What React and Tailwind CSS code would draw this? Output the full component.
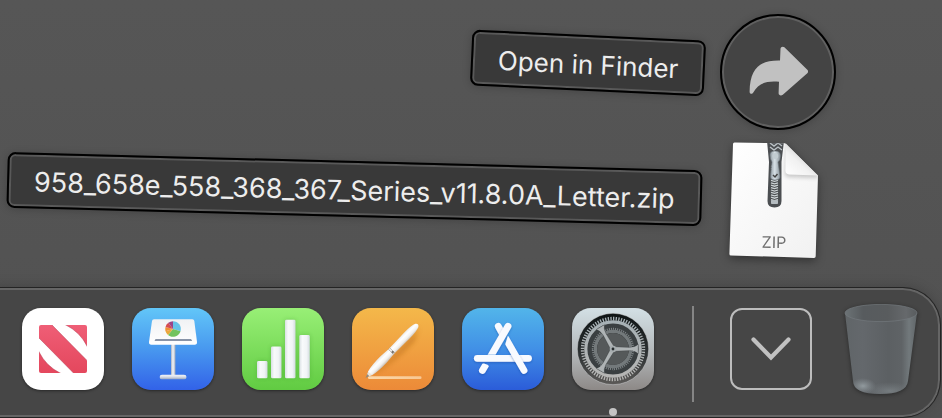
import React from "react";

const TILE = "block h-[82px] w-[82px] shrink-0 overflow-hidden rounded-[19px] shadow-[0_1px_3px_rgba(0,0,0,0.45)]";
const LABEL =
  "flex h-14 items-center rounded-lg border-2 border-black bg-[#393939] px-[25px] pt-[3px] leading-8 whitespace-nowrap text-[#ededed] shadow-[inset_0_0_0_2px_#595959,0_1px_8px_rgba(0,0,0,0.2)]";

function ShareArrow() {
  return (
    <svg viewBox="0 0 60 52" className="h-[52px] w-[60px]" aria-hidden="true">
      <path
        d="M32.5 2.7C32.6.7 35 0 36.4 1.3L59.3 23.7C60.3 24.7 60.3 26.2 59.3 27.2L34.8 48.7C33.3 50 30.6 49.5 30.6 47.3L31 35.7C18 34.7 10.5 37 5.3 46.5C4.2 48.5 1.6 48.1 1.6 45.7C2 22.5 11.5 14 32 14.5Z"
        fill="#c1c1c1"
      />
    </svg>
  );
}

function ZipFile() {
  const teeth = Array.from({ length: 15 }, (_, i) => 28 + i * 2.4);
  return (
    <svg viewBox="0 0 116 124" className="h-[124px] w-[116px] shrink-0 overflow-visible drop-shadow-[0_3px_5px_rgba(0,0,0,0.4)]" aria-hidden="true">
      <defs>
        <linearGradient id="zipPage" x1="0" y1="0" x2="1" y2="1">
          <stop offset="0" stopColor="#fff" />
          <stop offset="1" stopColor="#f1f1f1" />
        </linearGradient>
        <linearGradient id="zipFold" x1="0" y1="1" x2="0.55" y2="0.4">
          <stop offset="0" stopColor="#fff" />
          <stop offset="0.7" stopColor="#f1f1f1" />
          <stop offset="1" stopColor="#dadada" />
        </linearGradient>
        <linearGradient id="zipPull" x1="0" x2="1">
          <stop offset="0" stopColor="#8d979e" />
          <stop offset="0.45" stopColor="#d6dfe5" />
          <stop offset="1" stopColor="#879198" />
        </linearGradient>
        <filter id="zipSoft" x="-20%" y="-20%" width="140%" height="150%">
          <feGaussianBlur stdDeviation="2" />
        </filter>
        <clipPath id="zipClip">
          <path d="M14.5 4.5L65 5.2L98 37.5L95.7 118.2Q95.7 120 94 120L11 117.4Q9.3 117.4 9.4 115.7L13 6Q13 4.5 14.5 4.5Z" />
        </clipPath>
      </defs>
      <path d="M14.5 4.5L65 5.2L98 37.5L95.7 118.2Q95.7 120 94 120L11 117.4Q9.3 117.4 9.4 115.7L13 6Q13 4.5 14.5 4.5Z" fill="url(#zipPage)" />
      <g clipPath="url(#zipClip)">
        <path d="M66 5L65 36Q65 39 69 39L98 40V36Z" fill="#000" opacity="0.2" filter="url(#zipSoft)" />
        <path d="M47 3H64L61.5 24V63Q61.5 69.5 54.5 69.5Q47.5 69.5 47.5 63L49 24Z" fill="#4b4e51" />
        <path d="M50 5l4 3 4-3 4 3M50 9l4 3 4-3 4 3" stroke="#bbc2c6" strokeWidth="1.4" fill="none" />
        {teeth.map((y) => (
          <path key={y} d={`M51 ${y}l3.5 1l3.5 -1`} stroke="#cbd1d4" strokeWidth="1.3" fill="none" />
        ))}
        <rect x="51" y="62" width="7" height="4" rx="0.8" fill="#b5bcc0" />
        <path d="M50 17Q50 13 55 13Q60.5 13 60.5 18Q60.5 22 58 24L60 38Q60.5 42 55 42Q50 42 50.5 38L52 24Q50 21 50 17Z" fill="url(#zipPull)" stroke="#6d767c" strokeWidth="0.6" />
        <circle cx="55.3" cy="18" r="3" fill="#c1cbd1" />
        <path d="M53 37l2 2 2.5-3" stroke="#444" strokeWidth="1.5" fill="none" />
      </g>
      <path d="M65.6 5.2L97.8 37.5L69 36.4Q65.4 36.2 65.4 32.5Z" fill="url(#zipFold)" />
      <text x="54" y="110" textAnchor="middle" fontSize="16" fill="#6f6f6f" fontFamily="Inter, sans-serif" transform="rotate(1 54 104)">
        ZIP
      </text>
    </svg>
  );
}

function NewsIcon() {
  return (
    <svg viewBox="0 0 82 82" className={TILE} aria-hidden="true">
      <defs>
        <linearGradient id="newsRed" x1="0" y1="17" x2="0" y2="65" gradientUnits="userSpaceOnUse">
          <stop offset="0" stopColor="#ef5e76" />
          <stop offset="1" stopColor="#e4475d" />
        </linearGradient>
        <clipPath id="newsClip">
          <rect x="17" y="17" width="48" height="48" rx="2" />
        </clipPath>
      </defs>
      <rect width="82" height="82" fill="#fff" />
      <g clipPath="url(#newsClip)" fill="url(#newsRed)" stroke="#b53a50" strokeWidth="0.5">
        <path d="M16 16H29L66 53.5V66H52.5L16 29Z" />
        <path d="M43 16.5Q58.5 24 65.5 39V16.5Z" />
        <path d="M16.5 43Q24 58.5 39 65.5H16.5Z" />
      </g>
    </svg>
  );
}

function KeynoteIcon() {
  return (
    <svg viewBox="0 0 82 82" className={TILE} aria-hidden="true">
      <defs>
        <linearGradient id="keyBg" x1="0" y1="0" x2="0" y2="1">
          <stop offset="0" stopColor="#62c6f8" />
          <stop offset="0.5" stopColor="#4898ef" />
          <stop offset="1" stopColor="#3262e8" />
        </linearGradient>
        <linearGradient id="keyStem" x1="0" x2="1">
          <stop offset="0" stopColor="#a9b1bf" />
          <stop offset="0.45" stopColor="#f5f7fa" />
          <stop offset="1" stopColor="#a4acba" />
        </linearGradient>
        <linearGradient id="keyBase" x1="0" y1="0" x2="0" y2="1">
          <stop offset="0" stopColor="#f2f4f8" />
          <stop offset="0.5" stopColor="#d5dbe6" />
          <stop offset="1" stopColor="#9aa6bf" />
        </linearGradient>
        <linearGradient id="keyBoard" x1="0" y1="0" x2="0" y2="1">
          <stop offset="0" stopColor="#f1f2f4" />
          <stop offset="1" stopColor="#fff" />
        </linearGradient>
      </defs>
      <rect width="82" height="82" fill="url(#keyBg)" />
      <rect x="39" y="36" width="4.4" height="32" fill="url(#keyStem)" />
      <path d="M30 66.8H52Q54.5 66.8 54.5 69Q54.5 71.2 52.5 71.2H29.5Q27.7 71.2 27.7 69Q27.7 66.8 30 66.8Z" fill="url(#keyBase)" />
      <path d="M22 11.3H60.4Q62 11.3 62.3 13L65 34Q65.2 36.7 62.7 36.7H19.4Q16.8 36.7 17 34L20 13Q20.3 11.3 22 11.3Z" fill="url(#keyBoard)" />
      <path d="M23.5 31H59L60.2 33H22.5Z" fill="#8994a8" />
      <path d="M41 21V13.2A7.8 7.8 0 0 1 48.5 23.2Z" fill="#66c3e8" />
      <path d="M41 21L48.5 23.2A7.8 7.8 0 0 1 36 27Z" fill="#72c35e" />
      <path d="M41 21L36 27A7.8 7.8 0 0 1 33.5 23.2Z" fill="#eaa83c" />
      <path d="M41 21L33.5 23.2A7.8 7.8 0 0 1 33.5 19Z" fill="#f09034" />
      <path d="M41 21L33.5 19A7.8 7.8 0 0 1 36.3 14.8Z" fill="#d64c51" />
      <path d="M41 21L36.3 14.8A7.8 7.8 0 0 1 41 13.2Z" fill="#9b4588" />
    </svg>
  );
}

function NumbersIcon() {
  const bars = [
    [15, 53],
    [29, 38.5],
    [43, 11.7],
    [57.3, 27],
  ];
  return (
    <svg viewBox="0 0 82 82" className={TILE} aria-hidden="true">
      <defs>
        <linearGradient id="numBg" x1="0" y1="0" x2="0" y2="1">
          <stop offset="0" stopColor="#98ef76" />
          <stop offset="1" stopColor="#61cb42" />
        </linearGradient>
        <linearGradient id="numBar" x1="0" x2="1">
          <stop offset="0" stopColor="#d9e0e3" />
          <stop offset="0.3" stopColor="#f8fafb" />
          <stop offset="0.7" stopColor="#f1f4f6" />
          <stop offset="1" stopColor="#d3dbdf" />
        </linearGradient>
        <filter id="numSoft" x="-50%" y="-20%" width="200%" height="140%">
          <feGaussianBlur stdDeviation="2" />
        </filter>
      </defs>
      <rect width="82" height="82" fill="url(#numBg)" />
      {bars.map(([x, y]) => (
        <g key={x}>
          <rect x={x} y={y} width="10.5" height={70.3 - y} fill="#338b20" opacity="0.3" filter="url(#numSoft)" />
          <rect x={x} y={y} width="10.5" height={70.3 - y} rx="1.4" fill="url(#numBar)" />
        </g>
      ))}
    </svg>
  );
}

function PagesIcon() {
  return (
    <svg viewBox="0 0 82 82" className={TILE} aria-hidden="true">
      <defs>
        <linearGradient id="pagBg" x1="0" y1="0" x2="0" y2="1">
          <stop offset="0" stopColor="#f4b84a" />
          <stop offset="1" stopColor="#ec8a38" />
        </linearGradient>
        <linearGradient id="pagPen" x1="0" y1="0" x2="0" y2="1">
          <stop offset="0" stopColor="#e9e7e4" />
          <stop offset="0.35" stopColor="#fff" />
          <stop offset="0.7" stopColor="#f2f0ee" />
          <stop offset="1" stopColor="#c8bfb4" />
        </linearGradient>
        <linearGradient id="pagLine" x1="0" x2="1">
          <stop offset="0" stopColor="#fbd9ac" />
          <stop offset="1" stopColor="#f8c792" />
        </linearGradient>
        <filter id="pagSoft" x="-20%" y="-80%" width="140%" height="280%">
          <feGaussianBlur stdDeviation="2.4" />
        </filter>
      </defs>
      <rect width="82" height="82" fill="url(#pagBg)" />
      <rect x="16" y="68.3" width="53.5" height="2.6" rx="1.2" fill="url(#pagLine)" />
      <g transform="translate(13.5 70) rotate(-45.7)">
        <path d="M10 0Q25 5 40 4Q72 5 77 1L60 9Q30 9 10 3Z" fill="#a45910" opacity="0.45" filter="url(#pagSoft)" />
        <path d="M0 0L6 -2V2Z" fill="#8d8983" />
        <path d="M4 -1.6L7 -2.8V2.8L4 1.6Z" fill="#e8e3d8" />
        <path d="M6.5 -2.8Q14 -4.6 26 -4.4L37 -3.6L60 -4Q70 -3.8 73.5 -2.2Q76.4 0 73.5 2.2Q70 3.8 60 4L37 3.6L26 4.4Q14 4.6 6.5 2.8Z" fill="url(#pagPen)" />
        <path d="M36.6 -3.8V3.8M38.4 -3.8V3.8" stroke="#aaa69f" strokeWidth="0.8" />
        <circle cx="37.5" cy="1.4" r="1.2" fill="#77736c" />
      </g>
    </svg>
  );
}

function AppStoreIcon() {
  return (
    <svg viewBox="0 0 82 82" className={TILE} aria-hidden="true">
      <defs>
        <linearGradient id="appBg" x1="0" y1="0" x2="0" y2="1">
          <stop offset="0" stopColor="#52b5ea" />
          <stop offset="0.5" stopColor="#4190e6" />
          <stop offset="1" stopColor="#2b5cd9" />
        </linearGradient>
        <filter id="appShade" filterUnits="userSpaceOnUse" x="0" y="0" width="82" height="82">
          <feDropShadow dx="0" dy="1" stdDeviation="0.8" floodColor="#173f9c" floodOpacity="0.5" />
        </filter>
        <clipPath id="appFoot">
          <path d="M10 56L22 55.5Q26 56 28 59L26 70H10Z" />
        </clipPath>
        <clipPath id="appLeg">
          <path d="M43 37L46 27.5L80 60V75H50Z" />
        </clipPath>
        <clipPath id="appTop">
          <path d="M0 0H82V46.8H0Z" />
        </clipPath>
      </defs>
      <rect width="82" height="82" fill="url(#appBg)" />
      <g stroke="#f8faff" strokeWidth="6.8" strokeLinecap="round" fill="none">
        <path d="M36.3 18.3L40 25" filter="url(#appShade)" />
        <g clipPath="url(#appTop)">
          <path d="M46 18.3L28.3 49" filter="url(#appShade)" />
        </g>
        <path d="M15.3 50.3H66.5" filter="url(#appShade)" />
        <g filter="url(#appShade)">
          <g clipPath="url(#appFoot)">
            <path d="M26 53L20.4 62.4" />
          </g>
        </g>
        <g filter="url(#appShade)">
          <g clipPath="url(#appLeg)">
            <path d="M38 20.3L62 62.4" />
          </g>
        </g>
      </g>
    </svg>
  );
}

function SettingsIcon() {
  return (
    <svg viewBox="0 0 82 82" className={TILE} aria-hidden="true">
      <defs>
        <linearGradient id="setBg" x1="0" y1="0" x2="0" y2="1">
          <stop offset="0" stopColor="#d3e0e5" />
          <stop offset="0.55" stopColor="#b3b7b9" />
          <stop offset="1" stopColor="#8d8987" />
        </linearGradient>
        <linearGradient id="setDark" x1="0" y1="0" x2="0" y2="1">
          <stop offset="0" stopColor="#0d1314" />
          <stop offset="0.6" stopColor="#303435" />
          <stop offset="1" stopColor="#5c5a58" />
        </linearGradient>
        <linearGradient id="setMetal" x1="0" y1="9" x2="0" y2="73" gradientUnits="userSpaceOnUse">
          <stop offset="0" stopColor="#a5b0b5" />
          <stop offset="1" stopColor="#b7b6b4" />
        </linearGradient>
      </defs>
      <rect width="82" height="82" fill="url(#setBg)" />
      <circle cx="41" cy="41" r="35.7" fill="url(#setDark)" stroke="#d0d3d4" strokeWidth="0.5" />
      <g fill="none">
        <circle cx="41" cy="41" r="22.5" stroke="#3a3f41" strokeWidth="7" />
        <circle cx="41" cy="41" r="20.2" stroke="#7d8385" strokeWidth="2" pathLength="120" strokeDasharray="1 1" />
        <circle cx="41" cy="41" r="17.6" stroke="#73797b" strokeWidth="3.4" />
        <circle cx="41" cy="41" r="15.9" fill="#55595a" />
        <circle cx="41" cy="41" r="30.4" stroke="url(#setMetal)" strokeWidth="3.6" pathLength="144" strokeDasharray="1 1" />
        <circle cx="41" cy="41" r="27.2" stroke="url(#setMetal)" strokeWidth="3.2" />
        {[0, 120, 240].map((angle) => (
          <g key={angle} transform={`rotate(${angle} 41 41)`}>
            <path d="M41 38.8L58 39.4Q63.6 39 66.2 36.2V45.8Q63.6 43 58 42.6L41 43.2Z" fill="url(#setMetal)" stroke="#2d3233" strokeOpacity="0.45" strokeWidth="0.6" />
          </g>
        ))}
      </g>
      <circle cx="41" cy="41" r="3.3" fill="#a5acae" />
      <circle cx="41" cy="41" r="1.4" fill="#272c2e" />
    </svg>
  );
}

function TrashIcon() {
  return (
    <svg viewBox="0 0 74 92" className="block h-[92px] w-[74px] overflow-visible drop-shadow-[0_1px_2px_rgba(0,0,0,0.4)]" aria-hidden="true">
      <defs>
        <linearGradient id="binBody" x1="0" x2="1">
          <stop offset="0" stopColor="#606568" />
          <stop offset="0.25" stopColor="#64686c" />
          <stop offset="0.6" stopColor="#5c6063" />
          <stop offset="0.78" stopColor="#5f6366" />
          <stop offset="0.88" stopColor="#72797c" />
          <stop offset="1" stopColor="#5e6366" />
        </linearGradient>
        <linearGradient id="binInside" x1="0" x2="1">
          <stop offset="0" stopColor="#6c7376" />
          <stop offset="0.25" stopColor="#575b5e" />
          <stop offset="0.6" stopColor="#595c5e" />
          <stop offset="0.85" stopColor="#66696c" />
          <stop offset="1" stopColor="#585c5e" />
        </linearGradient>
        <radialGradient id="binGlow">
          <stop offset="0" stopColor="#9aa3a7" stopOpacity="0.85" />
          <stop offset="1" stopColor="#8b9498" stopOpacity="0" />
        </radialGradient>
        <clipPath id="binClip">
          <path d="M1 9L9 77Q9.5 90 36 90Q62.5 90 64 77L73 9Z" />
        </clipPath>
      </defs>
      <g clipPath="url(#binClip)">
        <rect width="74" height="92" fill="url(#binBody)" />
        <ellipse cx="19" cy="82" rx="13" ry="8" fill="url(#binGlow)" />
        <ellipse cx="46" cy="87" rx="24" ry="9" fill="url(#binGlow)" opacity="0.5" />
      </g>
      <ellipse cx="37" cy="9" rx="36" ry="8.6" fill="url(#binInside)" stroke="#73797c" strokeWidth="0.7" />
    </svg>
  );
}

const apps = [
  { name: "News", Icon: NewsIcon },
  { name: "Keynote", Icon: KeynoteIcon },
  { name: "Numbers", Icon: NumbersIcon },
  { name: "Pages", Icon: PagesIcon },
  { name: "App Store", Icon: AppStoreIcon },
  { name: "System Settings", Icon: SettingsIcon, running: true },
];

export default function App() {
  return (
    <div className="flex min-h-screen flex-col justify-between overflow-hidden bg-linear-to-b from-[#565656] to-[#515151] font-['Inter','Liberation_Sans',sans-serif]">
      <main className="flex flex-col items-end gap-2 pt-3.5 pr-[106px] pb-[25px]">
        <button type="button" className="flex items-start gap-[15px]">
          <span className={`${LABEL} mt-[21px] rotate-[2.7deg] text-[26px]`}>Open in Finder</span>
          <span className="flex h-[116px] w-[116px] shrink-0 items-center justify-center rounded-full border-2 border-black bg-[#444] shadow-[inset_0_0_0_2px_#606060,0_1px_8px_rgba(0,0,0,0.2)]">
            <ShareArrow />
          </span>
        </button>
        <button type="button" className="flex items-start gap-[18px]">
          <span className={`${LABEL} mt-[23px] rotate-[1.5deg] text-[27px]`}>958_658e_558_368_367_Series_v11.8.0A_Letter.zip</span>
          <ZipFile />
        </button>
      </main>

      <nav
        aria-label="Dock"
        className="mr-px -ml-2 flex h-[131px] items-start justify-end rounded-r-[38px] border-y border-r border-[#242424] bg-[#464646] pt-5 pr-[22px] shadow-[inset_0_0_0_2px_#656565,0_-2px_12px_rgba(0,0,0,0.15)]"
      >
        <ul className="flex gap-7">
          {apps.map(({ name, Icon, running }) => (
            <li key={name} className="flex flex-col items-center gap-[18px]">
              <button type="button" aria-label={name} className="block">
                <Icon />
              </button>
              {running && <span className="h-2 w-2 rounded-full bg-[#c4c4c4]" />}
            </li>
          ))}
        </ul>
        <span className="mr-9 ml-[38px] -mt-0.5 h-24 w-0.5 shrink-0 bg-[#858585]" />
        <button
          type="button"
          aria-label="Downloads"
          className="mr-8 flex h-[82px] w-[82px] shrink-0 items-center justify-center rounded-xl border-2 border-[#bdbdbd]"
        >
          <svg viewBox="0 0 40 24" className="h-6 w-10" aria-hidden="true">
            <path d="M2.5 2.5L20 20.5L37.5 2.5" fill="none" stroke="#c1c1c1" strokeWidth="4.2" strokeLinecap="round" />
          </svg>
        </button>
        <button type="button" aria-label="Trash" className="-mt-1 shrink-0">
          <TrashIcon />
        </button>
      </nav>
    </div>
  );
}
